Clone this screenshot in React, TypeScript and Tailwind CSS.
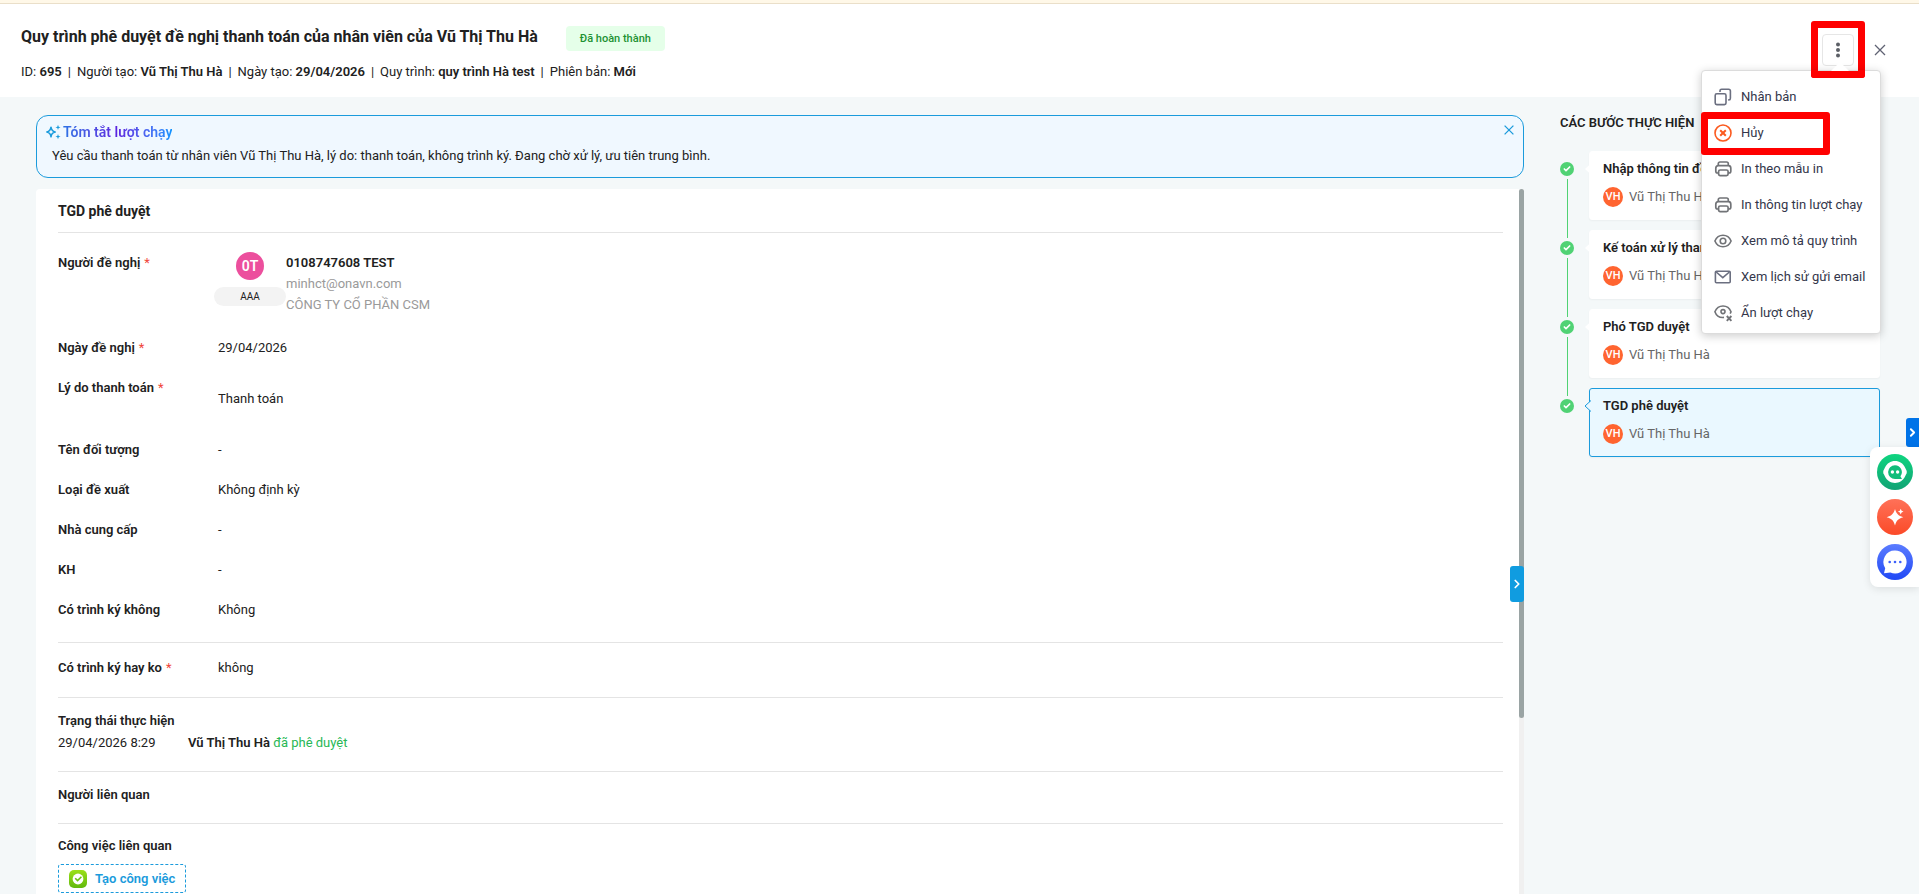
import React, { useState } from "react";
import { Check, ChevronRight } from "lucide-react";

interface Step {
  title: string;
  user: string;
  active?: boolean;
}

const steps: Step[] = [
  { title: "Nhập thông tin đề nghị", user: "Vũ Thị Thu Hà" },
  { title: "Kế toán xử lý thanh toán", user: "Vũ Thị Thu Hà" },
  { title: "Phó TGD duyệt", user: "Vũ Thị Thu Hà" },
  { title: "TGD phê duyệt", user: "Vũ Thị Thu Hà", active: true },
];

const meta = [
  { label: "ID:", value: "695" },
  { label: "Người tạo:", value: "Vũ Thị Thu Hà" },
  { label: "Ngày tạo:", value: "29/04/2026" },
  { label: "Quy trình:", value: "quy trình Hà test" },
  { label: "Phiên bản:", value: "Mới" },
];

const CopyIcon = () => (
  <svg viewBox="0 0 18 18" className="size-[18px]" fill="none" stroke="#6b6f80" strokeWidth="1.6">
    <rect x="1.2" y="5.8" width="10.8" height="10.8" rx="1.6" />
    <path d="M6 4V2.8C6 1.9 6.6 1.2 7.6 1.2H14.6C15.6 1.2 16.4 2 16.4 2.9V10.2C16.4 11.2 15.7 11.9 14.8 11.9H14.2" />
  </svg>
);

const CancelIcon = () => (
  <svg viewBox="0 0 18 18" className="size-[18px]" fill="none" stroke="#fb5a1f">
    <circle cx="9" cy="9" r="8" strokeWidth="1.6" />
    <path d="M6.2 6.2L11.8 11.8M11.8 6.2L6.2 11.8" strokeWidth="2" />
  </svg>
);

const PrintIcon = () => (
  <svg viewBox="0 0 18 18" className="size-[18px]" fill="none" stroke="#717377" strokeWidth="1.7" strokeLinejoin="round">
    <path d="M4.3 5.5V3.8C4.3 2.7 5 2 6 2H12.6C13.6 2 14.3 2.7 14.3 3.8V5.5" />
    <path d="M4.5 13H3.6C2.5 13 1.8 12.3 1.8 11.3V8.2C1.8 6.7 2.8 5.7 4.2 5.7H14.4C15.8 5.7 16.8 6.7 16.8 8.2V11.3C16.8 12.3 16.1 13 15 13H14.2" />
    <rect x="4.6" y="10" width="9.5" height="5.7" rx="1.6" />
  </svg>
);

const EyeIcon = () => (
  <svg viewBox="0 0 18 18" className="size-[18px]" fill="none" stroke="#717377" strokeWidth="1.6">
    <path d="M0.9 9C2.4 5.4 5.4 3.3 9 3.3S15.6 5.4 17.1 9C15.6 12.6 12.6 14.7 9 14.7S2.4 12.6 0.9 9Z" />
    <circle cx="9" cy="9" r="2.8" />
  </svg>
);

const MailIcon = () => (
  <svg viewBox="0 0 18 18" className="size-[18px]" fill="none" stroke="#6b6f80" strokeWidth="1.6">
    <rect x="1.4" y="3.2" width="14.8" height="11.6" rx="1" />
    <path d="M2.2 4L8.8 9.6L15.4 4" />
  </svg>
);

const HideIcon = () => (
  <svg viewBox="0 0 18 18" className="size-[18px] overflow-visible" fill="none" stroke="#717377" strokeWidth="1.6">
    <path d="M10 13.4C5.8 13.9 2.4 11.8 0.9 7.7C2.4 4.1 5.4 2 9 2S15.6 4.1 17 7.7C16.8 8.5 16.5 9 16.1 9.6" />
    <circle cx="9" cy="7.6" r="2" />
    <path d="M12.8 12L17.4 16.8M17.4 12L12.8 16.8" strokeWidth="1.9" />
  </svg>
);

const menuItems = [
  { label: "Nhân bản", icon: <CopyIcon /> },
  { label: "Hủy", icon: <CancelIcon /> },
  { label: "In theo mẫu in", icon: <PrintIcon /> },
  { label: "In thông tin lượt chạy", icon: <PrintIcon /> },
  { label: "Xem mô tả quy trình", icon: <EyeIcon /> },
  { label: "Xem lịch sử gửi email", icon: <MailIcon /> },
  { label: "Ẩn lượt chạy", icon: <HideIcon /> },
];

const Row = ({
  label,
  required,
  children,
}: {
  label: string;
  required?: boolean;
  children: React.ReactNode;
}) => (
  <div className="flex items-start pb-[18px]">
    <dt className="w-40 shrink-0 font-semibold">
      {label}
      {required && <span className="ml-1 font-normal text-[#f0453a]">*</span>}
    </dt>
    <dd className="flex-1">{children}</dd>
  </div>
);

export default function App() {
  const [menuOpen, setMenuOpen] = useState(true);
  const [showSummary, setShowSummary] = useState(true);

  return (
    <div className="relative flex h-screen flex-col overflow-hidden bg-[#f4f8f9] font-[Roboto,sans-serif] text-[13px] leading-[22px] text-[#212121]">
      <div className="h-1 shrink-0 border-b border-[#eadfc9] bg-[#fff8e8]"></div>

      {/* ===== HEADER ===== */}
      <header className="flex shrink-0 items-start justify-between bg-white pr-[33px] pl-[21px]">
        <div className="pt-[22px] pb-3.5">
          <div className="flex items-start gap-7">
            <h1 className="text-base leading-[22px] font-bold">
              Quy trình phê duyệt đề nghị thanh toán của nhân viên của Vũ Thị Thu Hà
            </h1>
            <span className="rounded bg-[#e5ffe9] px-3.5 py-0.5 text-[11px] leading-[21px] font-medium text-[#1d9233]">
              Đã hoàn thành
            </span>
          </div>
          <div className="flex pt-2.5">
            {meta.map((m, i) => (
              <span key={m.label} className="whitespace-pre">
                {i > 0 && <span className="px-1.5">|</span>}
                {m.label} <b className="font-semibold">{m.value}</b>
              </span>
            ))}
          </div>
        </div>

        <div className="flex items-center gap-5 pt-[30px]">
          <div className="relative">
            <button
              type="button"
              aria-label="Tùy chọn"
              onClick={() => setMenuOpen(!menuOpen)}
              className="flex size-8 items-center justify-center rounded-sm border border-[#e6e6e6] bg-white"
            >
              <svg viewBox="0 0 4 16" className="h-4 w-1" fill="#5c5f66">
                <circle cx="2" cy="2.5" r="2" />
                <circle cx="2" cy="8" r="2" />
                <circle cx="2" cy="13.5" r="2" />
              </svg>
            </button>
            <div className="pointer-events-none absolute -top-[13px] -left-[11px] z-10 h-[57px] w-[54px] rounded-[3px] border-7 border-[#ff0000]"></div>

            {menuOpen && (
              <div className="absolute top-9 -right-[27px] z-20 w-[180px]">
                <div className="rounded border border-[#dcdcdc] bg-white pt-2 pb-0.5 shadow-[0_2px_10px_rgba(0,0,0,0.2)]">
                  <svg viewBox="0 0 18 9" className="absolute -top-2 right-8 h-[9px] w-[18px]" fill="#fff">
                    <path d="M0 9L9 0L18 9Z" />
                  </svg>
                  <ul>
                    {menuItems.map((item) => (
                      <li key={item.label}>
                        <button
                          type="button"
                          className="flex h-9 w-full items-center gap-[9px] pl-3 text-[#33364a]"
                        >
                          {item.icon}
                          {item.label}
                        </button>
                      </li>
                    ))}
                  </ul>
                </div>
                <div className="pointer-events-none absolute top-[42px] left-0 h-[43px] w-[129px] rounded-[3px] border-7 border-[#ff0000]"></div>
                {/* cạnh dưới của khung đỏ quanh nút tùy chọn */}
                <div className="pointer-events-none absolute top-0 left-[110px] h-2 w-[54px] rounded-b-[3px] border-x-7 border-b-7 border-[#ff0000]"></div>
              </div>
            )}
          </div>
          <button type="button" aria-label="Đóng" className="flex w-3 items-center justify-center text-[#5f6273]">
            <svg viewBox="0 0 12 12" className="size-3" stroke="currentColor" strokeWidth="1.3">
              <path d="M1 1L11 11M11 1L1 11" />
            </svg>
          </button>
        </div>
      </header>

      {/* ===== BODY ===== */}
      <div className="flex min-h-0 flex-1 gap-9 pr-[39px] pl-9">
        <main className="relative flex min-w-0 flex-1 flex-col pt-[18px]">
          {showSummary && (
            <section className="mb-[11px] flex shrink-0 items-start justify-between rounded-xl border border-[#1b9bdc] bg-[#f0f8ff] pt-[5px] pr-[7px] pb-2.5 pl-2">
              <div>
                <div className="flex items-center gap-0.5">
                  <svg viewBox="0 0 16 16" className="size-4" fill="none" stroke="#1b9bdc" strokeWidth="1.5" strokeLinejoin="round">
                    <path d="M6 3.2C6.4 6 7.2 7.4 10.2 8C7.2 8.6 6.4 10 6 12.8C5.6 10 4.8 8.6 1.8 8C4.8 7.4 5.6 6 6 3.2Z" />
                    <path d="M13 0.8L13.7 2.7L15.6 3.4L13.7 4.1L13 6L12.3 4.1L10.4 3.4L12.3 2.7ZM13 10L13.7 11.9L15.6 12.6L13.7 13.3L13 15.2L12.3 13.3L10.4 12.6L12.3 11.9Z" fill="#1b9bdc" stroke="none" />
                  </svg>
                  <h2 className="bg-gradient-to-r from-[#2a72e5] via-[#5b21e0] to-[#0a93ff] bg-clip-text text-sm leading-[22px] font-semibold text-transparent">
                    Tóm tắt lượt chạy
                  </h2>
                </div>
                <p className="pt-0.5 pl-[7px]">
                  Yêu cầu thanh toán từ nhân viên Vũ Thị Thu Hà, lý do: thanh toán, không trình ký. Đang chờ xử
                  lý, ưu tiên trung bình.
                </p>
              </div>
              <button
                type="button"
                aria-label="Ẩn tóm tắt"
                onClick={() => setShowSummary(false)}
                className="pt-0.5 text-[#1b9bdc]"
              >
                <svg viewBox="0 0 12 12" className="m-px size-3" stroke="currentColor" strokeWidth="1.3">
                  <path d="M1.6 1.6L10.4 10.4M10.4 1.6L1.6 10.4" />
                </svg>
              </button>
            </section>
          )}

          <div className="flex min-h-0 flex-1">
            <div className="min-w-0 flex-1 overflow-hidden rounded-tl bg-white pr-4 pl-[22px]">
              <h2 className="border-b border-[#e4e4e4] pt-[11px] pb-2.5 text-sm leading-[22px] font-bold">
                TGD phê duyệt
              </h2>

              <dl className="border-b border-[#e4e4e4] pt-[19px] pb-[3px]">
                <Row label="Người đề nghị" required>
                  <div className="-ml-1 flex min-h-[67px] items-start leading-[21px]">
                    <div className="flex w-[72px] flex-col items-center gap-[7px]">
                      <span className="flex size-7 items-center justify-center rounded-full bg-[#ec4f9d] text-sm font-semibold text-white">
                        0T
                      </span>
                      <span className="w-full rounded-full bg-[#f3f3f3] text-center text-[10px] leading-[19px]">
                        AAA
                      </span>
                    </div>
                    <div>
                      <p className="font-semibold">0108747608 TEST</p>
                      <p className="text-[#9a9a9a]">minhct@onavn.com</p>
                      <p className="text-[#9a9a9a]">CÔNG TY CỔ PHẦN CSM</p>
                    </div>
                  </div>
                </Row>
                <Row label="Ngày đề nghị" required>29/04/2026</Row>
                <Row label="Lý do thanh toán" required>
                  <p className="py-[11px]">Thanh toán</p>
                </Row>
                <Row label="Tên đối tượng">-</Row>
                <Row label="Loại đề xuất">Không định kỳ</Row>
                <Row label="Nhà cung cấp">-</Row>
                <Row label="KH">-</Row>
                <Row label="Có trình ký không">Không</Row>
              </dl>

              <dl className="border-b border-[#e4e4e4] pt-3.5">
                <Row label="Có trình ký hay ko" required>không</Row>
              </dl>

              <section className="border-b border-[#e4e4e4] pt-3 pb-[17px]">
                <h3 className="font-semibold">Trạng thái thực hiện</h3>
                <div className="flex">
                  <span className="w-[130px]">29/04/2026 8:29</span>
                  <span>
                    <b className="font-semibold">Vũ Thị Thu Hà</b> <span className="text-[#27b855]">đã phê duyệt</span>
                  </span>
                </div>
              </section>

              <section className="border-b border-[#e4e4e4] pt-3 pb-[17px]">
                <h3 className="font-semibold">Người liên quan</h3>
              </section>

              <section className="pt-[11px]">
                <h3 className="font-semibold">Công việc liên quan</h3>
                <button
                  type="button"
                  className="mt-[7px] flex h-[29px] items-center gap-2 rounded-[3px] border border-dashed border-[#1b9bdc] px-2.5 font-semibold text-[#1b9bdc]"
                >
                  <svg viewBox="0 0 18 18" className="size-[18px]">
                    <defs>
                      <linearGradient id="task" x1="0" y1="0" x2="0" y2="1">
                        <stop offset="0" stopColor="#9be01a" />
                        <stop offset="1" stopColor="#62b90c" />
                      </linearGradient>
                    </defs>
                    <rect width="18" height="18" rx="5" fill="url(#task)" />
                    <circle cx="9" cy="9" r="5.4" fill="#fff" />
                    <path d="M6.2 8.2L8.6 10.6L12.4 6.8" fill="none" stroke="#6cc010" strokeWidth="1.6" />
                  </svg>
                  Tạo công việc
                </button>
              </section>
            </div>
            {/* thanh cuộn */}
            <div className="w-[5px] bg-[#f0f0f0]">
              <div className="h-3/4 rounded-sm bg-[#9aa4a4]"></div>
            </div>
          </div>

          <button
            type="button"
            aria-label="Thu gọn các bước"
            className="absolute top-[469px] right-0 flex h-9 w-3.5 items-center justify-center rounded-[3px] bg-[#109ce0] text-white"
          >
            <ChevronRight size={14} strokeWidth={3} />
          </button>
        </main>

        {/* ===== CÁC BƯỚC ===== */}
        <aside className="w-80 shrink-0 pt-[15px]">
          <h2 className="font-semibold">CÁC BƯỚC THỰC HIỆN</h2>
          <ol className="flex flex-col gap-2.5 pt-[17px]">
            {steps.map((step, i) => (
              <li key={i} className="relative flex gap-[15px]">
                <div className="flex flex-col items-center pt-[11px]">
                  <span className="flex size-3.5 items-center justify-center rounded-full bg-[#50d274] text-white">
                    <Check size={8} strokeWidth={5} />
                  </span>
                  {i < steps.length - 1 && <div className="mt-[3px] -mb-[18px] w-px flex-1 bg-[#50d274]"></div>}
                </div>
                <div
                  className={`relative h-[69px] flex-1 rounded-[3px] border px-[13px] pt-1.5 shadow-[0_1px_2px_rgba(0,0,0,0.04)] ${
                    step.active ? "border-[#1b9bdc] bg-[#eaf8ff]" : "border-white bg-white"
                  }`}
                >
                  <svg
                    viewBox="0 0 7 12"
                    className="absolute top-[11px] -left-1.5 h-3 w-[7px]"
                    fill={step.active ? "#eaf8ff" : "#fff"}
                    stroke={step.active ? "#1b9bdc" : "none"}
                  >
                    <path d="M7 0.5L1 6L7 11.5" />
                  </svg>
                  <h3 className="leading-[22px] font-semibold">{step.title}</h3>
                  <div className="flex items-center gap-1.5 pt-1.5">
                    <span className="flex size-5 items-center justify-center rounded-full bg-[#ff6430] text-[11px] font-medium text-white">
                      VH
                    </span>
                    <span className="text-[#666]">{step.user}</span>
                  </div>
                </div>
              </li>
            ))}
          </ol>
        </aside>
      </div>

      {/* ===== NÚT NỔI BÊN PHẢI ===== */}
      <div className="absolute top-[418px] right-0 z-10 flex flex-col items-end">
        <button
          type="button"
          aria-label="Thu gọn"
          className="flex h-[29px] w-[13px] items-center justify-center rounded-l-[3px] bg-[#0073e8] text-white"
        >
          <ChevronRight size={13} strokeWidth={3.5} />
        </button>
        <div className="flex flex-col gap-[9px] rounded-l-lg bg-white py-[7px] pr-1.5 pl-[7px] shadow-[0_2px_8px_rgba(0,0,0,0.1)]">
          <button type="button" aria-label="Trợ lý">
            <svg viewBox="0 0 36 36" className="size-9">
              <defs>
                <linearGradient id="bot" x1="0" y1="0" x2="0" y2="1">
                  <stop offset="0" stopColor="#0fd580" />
                  <stop offset="1" stopColor="#12a374" />
                </linearGradient>
              </defs>
              <circle cx="18" cy="18" r="18" fill="url(#bot)" />
              <path d="M18 7C22.5 7 26 9.4 28 13.4L29.6 16.8C29.9 17.6 29.9 18.4 29.6 19.2L28 22.6C26 26.6 22.5 29 18 29S10 26.6 8 22.6L6.4 19.2C6.1 18.4 6.1 17.6 6.4 16.8L8 13.4C10 9.4 13.5 7 18 7Z" fill="#fff" />
              <path d="M18 11.2A6.9 6.9 0 1 0 18 25H25L23.4 22.3A6.9 6.9 0 0 0 18 11.2Z" fill="#10bd7a" />
              <circle cx="15.4" cy="18" r="1.7" fill="#fff" />
              <circle cx="20.6" cy="18" r="1.7" fill="#fff" />
            </svg>
          </button>
          <button type="button" aria-label="AI">
            <svg viewBox="0 0 36 36" className="size-9">
              <defs>
                <linearGradient id="spark" x1="0" y1="0" x2="0" y2="1">
                  <stop offset="0" stopColor="#ff7158" />
                  <stop offset="1" stopColor="#fb4a28" />
                </linearGradient>
              </defs>
              <circle cx="18" cy="18" r="18" fill="url(#spark)" />
              <path d="M18 10C19.6 15 21 16.6 26.3 18.2C21 19.8 19.6 21.4 18 26.5C16.4 21.4 15 19.8 9.7 18.2C15 16.6 16.4 15 18 10Z" fill="#fff" />
              <path d="M23.7 9.8L24.6 11.7L26.5 12.6L24.6 13.5L23.7 15.4L22.8 13.5L20.9 12.6L22.8 11.7Z" fill="#fff" />
            </svg>
          </button>
          <button type="button" aria-label="Trò chuyện">
            <svg viewBox="0 0 36 36" className="size-9">
              <defs>
                <linearGradient id="chat" x1="0" y1="0" x2="0" y2="1">
                  <stop offset="0" stopColor="#5b7cff" />
                  <stop offset="1" stopColor="#2149f5" />
                </linearGradient>
              </defs>
              <circle cx="18" cy="18" r="18" fill="url(#chat)" />
              <path d="M18 6.5A11.5 11.5 0 1 1 13.4 28.5L7 29.3L8.2 24.2A11.5 11.5 0 0 1 18 6.5Z" fill="#fff" />
              <circle cx="12.7" cy="18" r="1.3" fill="#3c5ffb" />
              <circle cx="18" cy="18" r="1.3" fill="#3c5ffb" />
              <circle cx="23.3" cy="18" r="1.3" fill="#3c5ffb" />
            </svg>
          </button>
        </div>
      </div>
    </div>
  );
}
